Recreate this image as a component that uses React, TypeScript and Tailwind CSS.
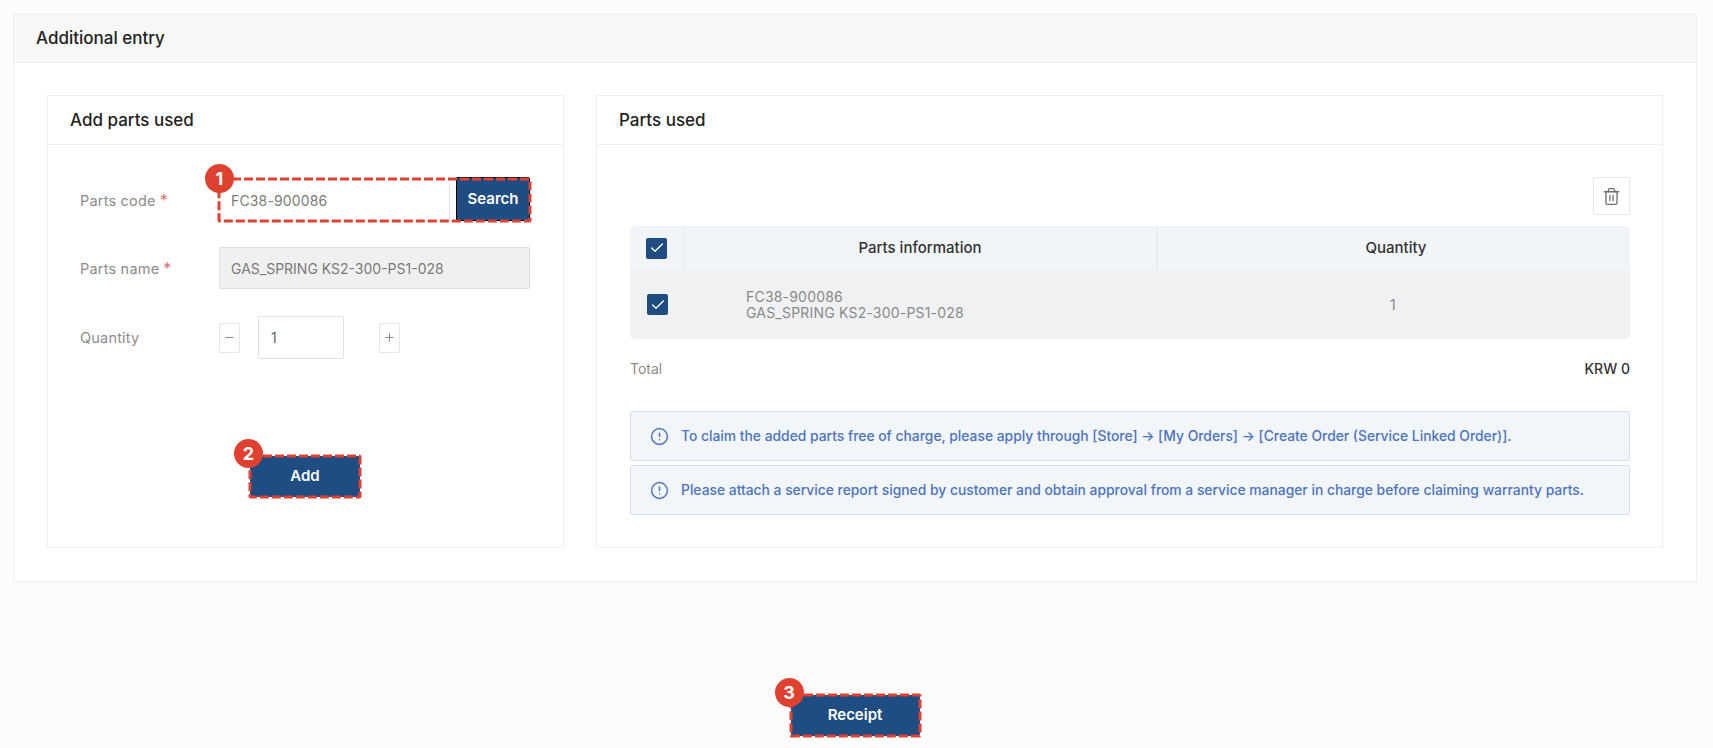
import { Check, CircleAlert, Minus, Plus, Trash2 } from "lucide-react";

const Badge = ({ n, className }: { n: number; className: string }) => (
  <span className={`absolute z-10 flex h-[29px] w-[29px] items-center justify-center rounded-full bg-[#e04030] text-[18px] font-bold text-white ${className}`}>
    {n}
  </span>
);

const Dashed = () => (
  <svg className="pointer-events-none absolute inset-0 h-full w-full overflow-visible" aria-hidden="true">
    <rect x="0" y="0" width="100%" height="100%" rx="1" fill="none" stroke="#e04030" strokeWidth="3" strokeDasharray="9 3" />
  </svg>
);

const Box = () => (
  <span className="flex h-[21px] w-[21px] items-center justify-center rounded-[2px] bg-[#1f4d82]">
    <Check size={16} strokeWidth={2} className="text-white" />
  </span>
);

const Label = ({ text, req }: { text: string; req?: boolean }) => (
  <span className="w-[139px] shrink-0 text-[14.5px] tracking-[0.2px] text-[#8c8c8c]">
    {text}
    {req && <span className="ml-1 text-[16px] text-[#e2736a]">*</span>}
  </span>
);

const Note = ({ text }: { text: string }) => (
  <div className="flex h-[50px] items-center rounded-[2px] border border-[#d5e0ee] bg-[#f2f5f9] pl-[19px] text-[13.85px] font-medium text-[#4b74c2]">
    <CircleAlert size={19} strokeWidth={1.8} className="mr-[12px] shrink-0" />
    <span>{text}</span>
  </div>
);

export default function App() {
  return (
    <div className="flex min-h-screen flex-col bg-[#fcfcfc] pb-[11px] pl-[13px] pr-[16px] pt-[14px] font-['Inter',sans-serif]">
      <section className="border border-[#f0f0f0] bg-white">
        <header className="flex h-[48px] items-center border-b border-[#f0f0f0] bg-[#f8f8f8] pl-[22px] text-[17px] font-medium text-[#222]">
          Additional entry
        </header>
        <div className="flex gap-[32px] px-[33px] pb-[33px] pt-[32px]">
          <div className="h-[453px] w-[517px] shrink-0 border border-[#f0f0f0]">
            <h2 className="flex h-[49px] items-center border-b border-[#f0f0f0] pl-[22px] pt-[2px] text-[17px] font-medium text-[#222]">
              Add parts used
            </h2>
            <div className="pl-[32px] pr-[33px] pt-[34px]">
              <div className="flex h-[42px] items-center">
                <Label text="Parts code" req />
                <div className="relative flex h-[42px] w-[312px] items-center justify-between">
                  <div className="flex h-full w-[231px] items-center border-r border-[#dcdfe4] pl-[12px] text-[14px] tracking-[0.15px] text-[#7a7a7a]">FC38-900086</div>
                  <button className="-mt-[2px] h-[44px] w-[74px] rounded-[2px] border border-black bg-[#1f4d82] text-[15px] font-semibold text-white">Search</button>
                  <Dashed />
                  <Badge n={1} className="-left-[14px] -top-[15px]" />
                </div>
              </div>
              <div className="mt-[26px] flex h-[42px] items-center">
                <Label text="Parts name" req />
                <div className="flex h-[42px] w-[311px] items-center rounded-[2px] border border-[#dedede] bg-[#f0f0f0] pl-[11px] text-[14px] text-[#7a7a7a]">GAS_SPRING KS2-300-PS1-028</div>
              </div>
              <div className="mt-[27px] flex h-[43px] items-center">
                <Label text="Quantity" />
                <button className="flex h-[30px] w-[21px] items-center justify-center rounded-[2px] border border-[#e3e6ea] text-[#8c8c8c]"><Minus size={13} /></button>
                <div className="ml-[18px] flex h-[43px] w-[86px] items-center rounded-[2px] border border-[#dfe3e9] pl-[12px] text-[14px] text-[#666]">1</div>
                <button className="ml-[35px] flex h-[30px] w-[21px] items-center justify-center rounded-[2px] border border-[#e3e6ea] text-[#8c8c8c]"><Plus size={13} /></button>
              </div>
              <div className="mt-[97px] flex justify-center">
                <div className="relative h-[41px] w-[110px]">
                  <button className="h-full w-full rounded-[2px] bg-[#1f4d82] text-[15px] font-semibold text-white">Add</button>
                  <Dashed />
                  <Badge n={2} className="-left-[16px] -top-[17px]" />
                </div>
              </div>
            </div>
          </div>
          <div className="h-[453px] flex-1 border border-[#f0f0f0]">
            <h2 className="flex h-[49px] items-center border-b border-[#f0f0f0] pl-[22px] pt-[2px] text-[17px] font-medium text-[#222]">
              Parts used
            </h2>
            <div className="pl-[33px] pr-[32px] pt-[32px]">
              <div className="flex justify-end">
                <button className="flex h-[38px] w-[37px] items-center justify-center rounded-[2px] border border-[#e3e6ea] text-[#6f6f6f]"><Trash2 size={19} strokeWidth={1.7} /></button>
              </div>
              <div className="mt-[11px] overflow-hidden rounded-[5px]">
                <div className="grid h-[44px] grid-cols-[54px_474px_1fr] items-center bg-[#f1f4f8] text-[15px] font-medium text-[#333]">
                  <div className="flex h-full items-center border-r border-[#e9edf2] pl-[16px]"><Box /></div>
                  <div className="flex h-full items-center justify-center border-r-2 border-[#e9edf2]">Parts information</div>
                  <div className="pl-[4px] text-center">Quantity</div>
                </div>
                <div className="grid h-[69px] grid-cols-[54px_474px_1fr] items-center bg-[#f0f1f3] text-[14px] tracking-[0.2px] text-[#8a8a8a]">
                  <div className="pl-[17px]"><Box /></div>
                  <div className="pl-[62px] leading-[16px]">
                    <div>FC38-900086</div>
                    <div>GAS_SPRING KS2-300-PS1-028</div>
                  </div>
                  <div className="pr-[2px] text-center">1</div>
                </div>
              </div>
              <div className="mt-[19px] flex h-[20px] items-center justify-between">
                <span className="text-[14px] text-[#8c8c8c]">Total</span>
                <span className="text-[14px] font-medium text-[#333]">KRW 0</span>
              </div>
              <div className="mt-[33px] flex flex-col gap-[4px]">
                <Note text="To claim the added parts free of charge, please apply through [Store] → [My Orders] → [Create Order (Service Linked Order)]." />
                <Note text="Please attach a service report signed by customer and obtain approval from a service manager in charge before claiming warranty parts." />
              </div>
            </div>
          </div>
        </div>
      </section>
      <div className="mt-[113px] flex justify-center">
        <div className="relative h-[41px] w-[129px]">
          <button className="h-full w-full rounded-[2px] bg-[#1f4d82] text-[15px] font-semibold text-white">Receipt</button>
          <Dashed />
          <Badge n={3} className="-left-[16px] -top-[17px]" />
        </div>
      </div>
    </div>
  );
}
